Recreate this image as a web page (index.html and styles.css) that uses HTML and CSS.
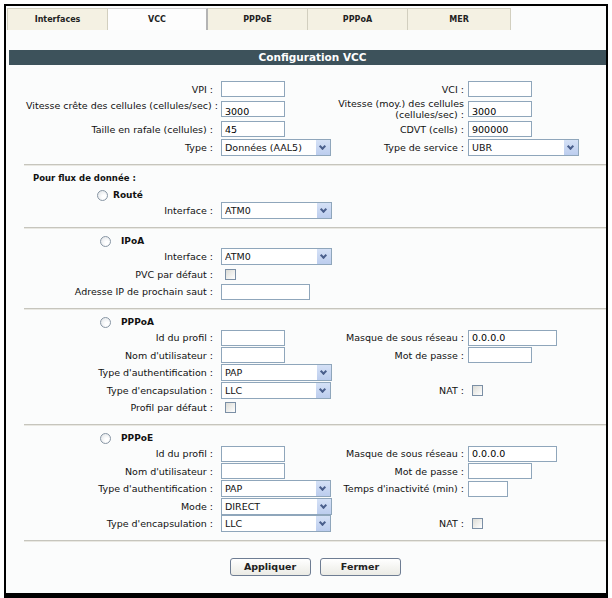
FILE: index.html
```html
<!DOCTYPE html>
<html lang="fr">
<head>
  <meta charset="UTF-8">
  <title>Configuration VCC</title>
  <link rel="stylesheet" href="styles.css">
</head>
<body>

  <div class="frame">

    <ul class="tabs">
      <li class="tab">Interfaces</li>
      <li class="tab active">VCC</li>
      <li class="tab">PPPoE</li>
      <li class="tab">PPPoA</li>
      <li class="tab wide">MER</li>
    </ul>

    <div class="title">Configuration VCC</div>

    <div class="main">
      <div class="row">
        <span class="label">VPI :</span>
        <span><input class="text" type="text"></span>
        <span class="label">VCI :</span>
        <span><input class="text" type="text"></span>
      </div>
      <div class="row tall">
        <span class="label top">Vitesse crête des cellules (cellules/sec) :</span>
        <span><input class="text low" type="text" value="3000"></span>
        <span class="label">Vitesse (moy.) des cellules<br>(cellules/sec) :</span>
        <span><input class="text low" type="text" value="3000"></span>
      </div>
      <div class="row">
        <span class="label">Taille en rafale (cellules) :</span>
        <span><input class="text" type="text" value="45"></span>
        <span class="label">CDVT (cells) :</span>
        <span><input class="text" type="text" value="900000"></span>
      </div>
      <div class="row">
        <span class="label">Type :</span>
        <span class="combo"><select><option>Données (AAL5)</option></select></span>
        <span class="label">Type de service :</span>
        <span class="combo"><select><option>UBR</option></select></span>
      </div>
    </div>

    <hr class="sep first">

    <div class="section">
      <div class="flow-title">Pour flux de donnée :</div>
      <label class="head near"><input class="radio" type="radio" name="mode">Routé</label>
      <div class="row">
        <span class="label">Interface :</span>
        <span class="combo"><select><option>ATM0</option></select></span>
      </div>
    </div>

    <hr class="sep">

    <div class="section">
      <label class="head"><input class="radio" type="radio" name="mode">IPoA</label>
      <div class="row">
        <span class="label">Interface :</span>
        <span class="combo"><select><option>ATM0</option></select></span>
      </div>
      <div class="row">
        <span class="label">PVC par défaut :</span>
        <span><input class="check" type="checkbox"></span>
      </div>
      <div class="row">
        <span class="label">Adresse IP de prochain saut :</span>
        <span><input class="text ip" type="text"></span>
      </div>
    </div>

    <hr class="sep">

    <div class="section">
      <label class="head"><input class="radio" type="radio" name="mode">PPPoA</label>
      <div class="row">
        <span class="label">Id du profil :</span>
        <span><input class="text" type="text"></span>
        <span class="label">Masque de sous réseau :</span>
        <span><input class="text ip" type="text" value="0.0.0.0"></span>
      </div>
      <div class="row">
        <span class="label">Nom d'utilisateur :</span>
        <span><input class="text" type="text"></span>
        <span class="label">Mot de passe :</span>
        <span><input class="text" type="password"></span>
      </div>
      <div class="row">
        <span class="label">Type d'authentification :</span>
        <span class="combo"><select><option>PAP</option></select></span>
      </div>
      <div class="row">
        <span class="label">Type d'encapsulation :</span>
        <span class="combo"><select><option>LLC</option></select></span>
        <span class="label">NAT :</span>
        <span><input class="check" type="checkbox"></span>
      </div>
      <div class="row">
        <span class="label">Profil par défaut :</span>
        <span><input class="check" type="checkbox"></span>
      </div>
    </div>

    <hr class="sep">

    <div class="section">
      <label class="head"><input class="radio" type="radio" name="mode">PPPoE</label>
      <div class="row">
        <span class="label">Id du profil :</span>
        <span><input class="text" type="text"></span>
        <span class="label">Masque de sous réseau :</span>
        <span><input class="text ip" type="text" value="0.0.0.0"></span>
      </div>
      <div class="row">
        <span class="label">Nom d'utilisateur :</span>
        <span><input class="text" type="text"></span>
        <span class="label">Mot de passe :</span>
        <span><input class="text" type="password"></span>
      </div>
      <div class="row">
        <span class="label">Type d'authentification :</span>
        <span class="combo"><select><option>PAP</option></select></span>
        <span class="label">Temps d'inactivité (min) :</span>
        <span><input class="text short" type="text"></span>
      </div>
      <div class="row">
        <span class="label">Mode :</span>
        <span class="combo"><select><option>DIRECT</option></select></span>
      </div>
      <div class="row">
        <span class="label">Type d'encapsulation :</span>
        <span class="combo"><select><option>LLC</option></select></span>
        <span class="label">NAT :</span>
        <span><input class="check" type="checkbox"></span>
      </div>
    </div>

    <hr class="sep">

    <div class="actions">
      <button class="btn" type="button">Appliquer</button>
      <button class="btn" type="button">Fermer</button>
    </div>

  </div>

</body>
</html>
```

FILE: styles.css
```css
body {
  margin: 0;
  background-color: #ffffff;
  font-family: "DejaVu Sans", Verdana, sans-serif;
  font-size: 9.5px;
  line-height: 11px;
  color: #111111;
}

.frame {
  width: 600px;
  height: 587px;
  margin: 4px 0 0 4px;
  border: 2px solid #000000;
  border-bottom-width: 5px;
  background-color: #fbfcfc;
  overflow: hidden;
}

/* tabs */
.tabs {
  display: flex;
  margin: 0;
  padding: 2px 0 0 1px;
  list-style: none;
}

.tab {
  width: 99px;
  height: 21px;
  border: 1px solid #d2cfbf;
  border-bottom: none;
  border-left: none;
  background-color: #f4f1e3;
  font-weight: bold;
  font-size: 8px;
  line-height: 21px;
  text-align: center;
  color: #222222;
}

.tab:first-child {
  border-left: 1px solid #d2cfbf;
}

.tab.active {
  width: 98px;
  background-color: #fdfdfd;
  border-top-color: #cfcfcf;
  border-right: 2px solid #b4b4b4;
}

.tab.wide {
  width: 102px;
}

.title {
  height: 15px;
  margin: 20px 0 0 3px;
  padding-left: 10px;
  background-color: #3d525b;
  color: #ffffff;
  font-weight: bold;
  font-size: 10.5px;
  line-height: 15px;
  text-align: center;
}

/* form grid */
.main {
  margin-top: 15px;
}

.row {
  display: grid;
  grid-template-columns: 215px 114px 133px 1fr;
  align-items: center;
  height: 17.5px;
}

.main .row {
  height: 18px;
}

.main .row.tall {
  height: 22px;
}

.label {
  padding-right: 8px;
  text-align: right;
  white-space: nowrap;
}

.label:nth-child(3) {
  padding-right: 4px;
}

.label.top {
  align-self: start;
  padding-top: 2px;
  padding-right: 3px;
}

.text {
  display: block;
  box-sizing: border-box;
  width: 64px;
  height: 16px;
  margin: 0;
  padding: 0 3px;
  border: 1px solid #8fa6bb;
  background-color: #ffffff;
  font-family: inherit;
  font-size: 9.5px;
}

.text.low {
  padding-top: 4px;
}

.text.ip {
  width: 89px;
}

.text.short {
  width: 40px;
}

.combo {
  position: relative;
  display: block;
  width: 110px;
  height: 17px;
}

.combo select {
  appearance: none;
  box-sizing: border-box;
  width: 100%;
  height: 17px;
  margin: 0;
  padding: 0 0 0 3px;
  border: 1px solid #8fa6bb;
  border-radius: 0;
  background-color: #ffffff;
  font-family: inherit;
  font-size: 9.5px;
  color: #111111;
}

.row > .combo:last-child {
  width: 111px;
}

/* arrow button of the dropdown */
.combo::before {
  content: "";
  position: absolute;
  top: 1px;
  right: 1px;
  width: 14px;
  height: 15px;
  background: linear-gradient(#d5e1f6, #bccdee);
  pointer-events: none;
}

.combo::after {
  content: "";
  position: absolute;
  top: 5px;
  right: 6px;
  width: 3px;
  height: 3px;
  border-right: 2px solid #4a5f8c;
  border-bottom: 2px solid #4a5f8c;
  transform: rotate(45deg);
  pointer-events: none;
}

.check {
  appearance: none;
  display: block;
  width: 11px;
  height: 11px;
  margin: 0 0 0 4px;
  border: 1px solid #7b8fa5;
  background: linear-gradient(135deg, #dcdcd6, #ffffff);
}

.radio {
  appearance: none;
  width: 11px;
  height: 11px;
  margin: 0;
  border: 1px solid #8896a4;
  border-radius: 50%;
  background: radial-gradient(circle at 65% 65%, #ffffff 20%, #dde1e5);
}

/* separators and sections */
.sep {
  height: 0;
  margin: 0 0 0 18px;
  border: none;
  border-top: 1px solid #c6c5bd;
  border-bottom: 1px solid #e9e8e2;
}

.sep.first {
  margin-top: 8px;
}

.section {
  padding: 5px 0 7.5px;
}

.flow-title {
  padding: 1px 0 0 27px;
  font-weight: bold;
  font-size: 8.5px;
  line-height: 12px;
}

.head {
  display: flex;
  align-items: center;
  gap: 10px;
  height: 14px;
  padding-left: 94px;
  font-weight: bold;
  font-size: 9px;
}

.head.near {
  margin-top: 4px;
  padding-left: 91px;
  gap: 5px;
}

.actions {
  display: flex;
  justify-content: center;
  gap: 9px;
  margin: 15.5px 0 0 18px;
}

.btn {
  width: 81px;
  height: 18px;
  padding: 0;
  border: 1px solid #6e7d93;
  border-radius: 3px;
  background: linear-gradient(#ffffff, #ebebe5);
  font-family: inherit;
  font-weight: bold;
  font-size: 9.5px;
  color: #222222;
}
```
